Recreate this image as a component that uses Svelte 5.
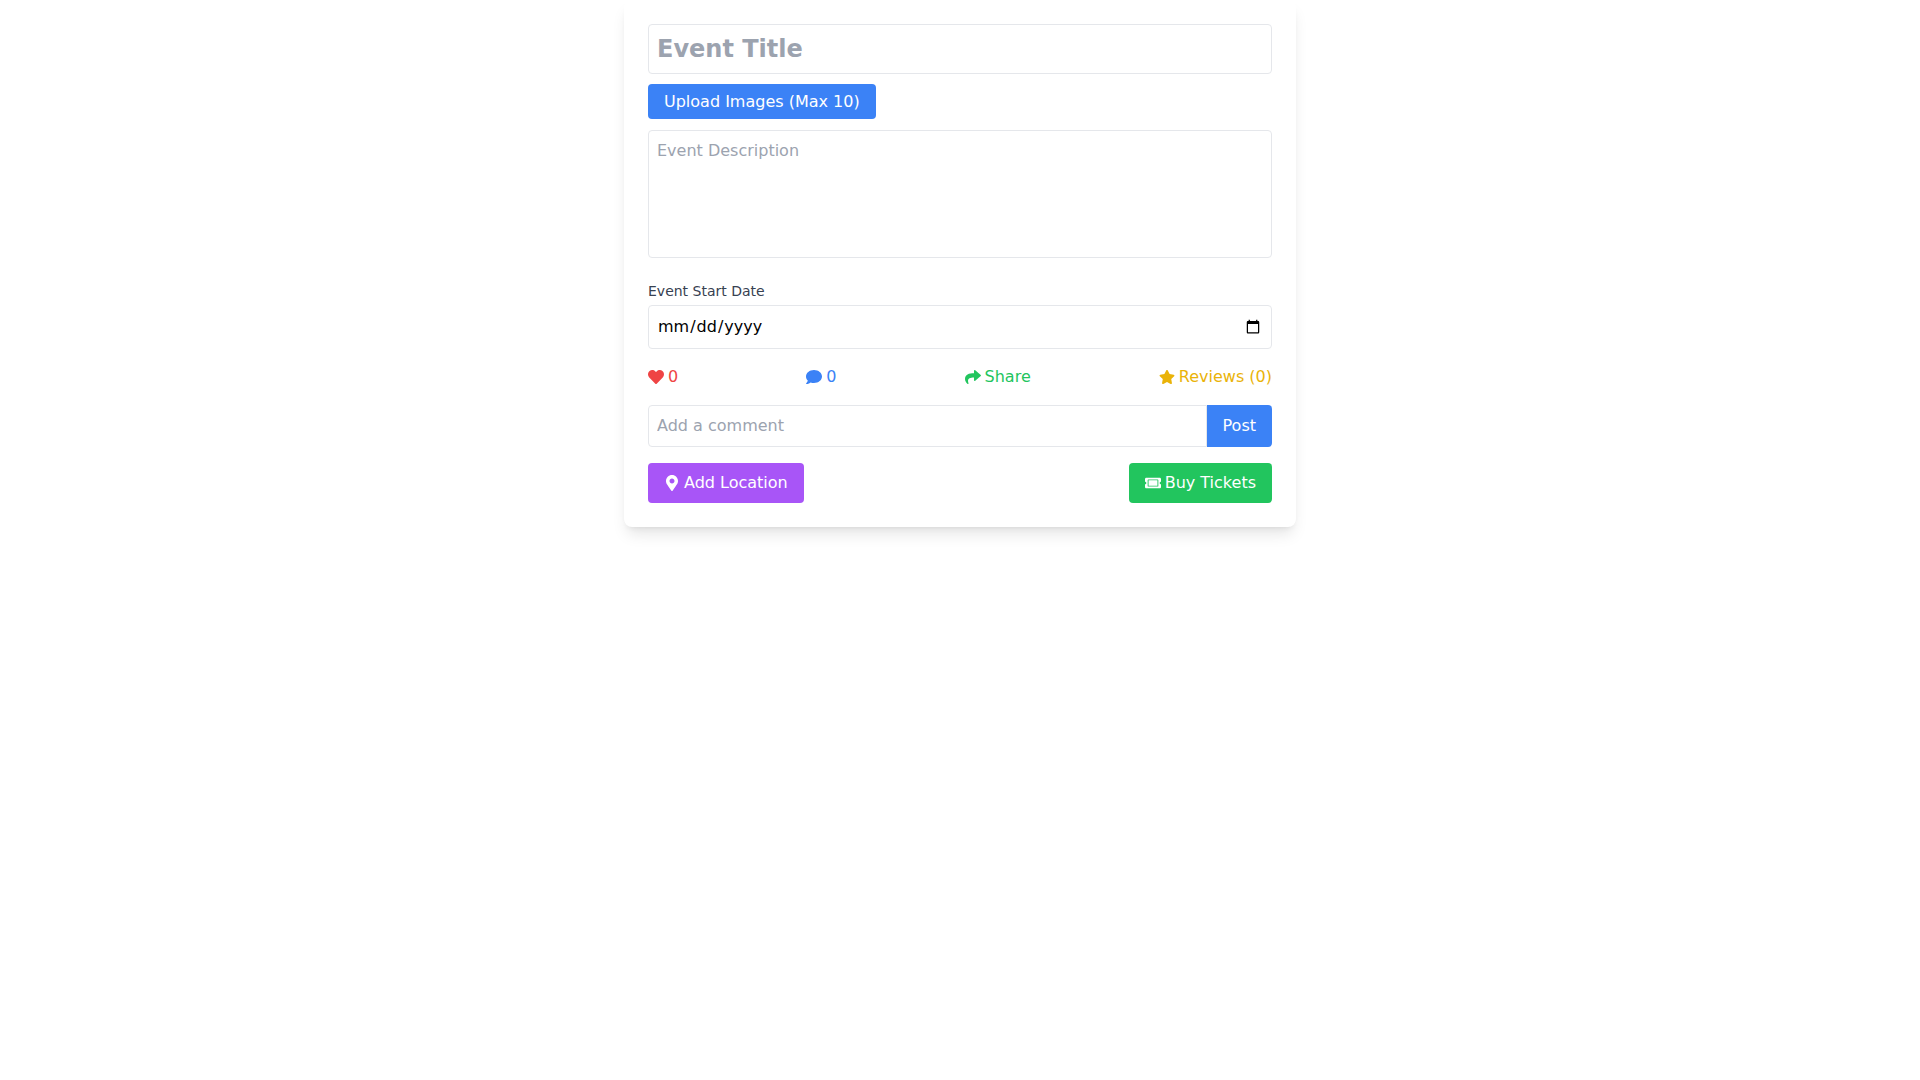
<script lang="ts">
	type Icon = { viewBox: string; path: string };

	const icons: Record<string, Icon> = {
		heart: {
			viewBox: '0 0 512 512',
			path: 'M462.3 62.6C407.5 15.9 326 24.3 275.7 76.2L256 96.5l-19.7-20.3C186.1 24.3 104.5 15.9 49.7 62.6c-62.8 53.6-66.1 149.8-9.9 207.9l193.5 199.8c12.5 12.9 32.8 12.9 45.3 0l193.5-199.8c56.3-58.1 53-154.3-9.8-207.9z'
		},
		comment: {
			viewBox: '0 0 512 512',
			path: 'M256 32C114.6 32 0 125.1 0 240c0 49.6 21.4 95 57 130.7C44.5 421.1 2.7 466 2.2 466.5c-2.2 2.3-2.8 5.7-1.5 8.7S4.8 480 8 480c66.3 0 116-31.8 140.6-51.4 32.7 12.3 69 19.4 107.4 19.4 141.4 0 256-93.1 256-208S397.4 32 256 32z'
		},
		share: {
			viewBox: '0 0 512 512',
			path: 'M503.691 189.836L327.687 37.851C312.281 24.546 288 35.347 288 56.015v80.053C127.371 137.907 0 170.1 0 322.326c0 61.441 39.581 122.309 83.333 154.132 13.653 9.931 33.111-2.533 28.077-18.631C66.066 312.814 132.917 274.316 288 272.085V360c0 20.7 24.3 31.453 39.687 18.164l176.004-152c11.071-9.562 11.086-26.753 0-36.328z'
		},
		star: {
			viewBox: '0 0 576 512',
			path: 'M259.3 17.8L194 150.2 47.9 171.5c-26.2 3.8-36.7 36.1-17.7 54.6l105.7 103-25 145.5c-4.5 26.3 23.2 46 46.4 33.7L288 439.6l130.7 68.7c23.2 12.2 50.9-7.4 46.4-33.7l-25-145.5 105.7-103c19-18.5 8.5-50.8-17.7-54.6L382 150.2 316.7 17.8c-11.7-23.6-45.6-23.9-57.4 0z'
		},
		marker: {
			viewBox: '0 0 384 512',
			path: 'M172.268 501.67C26.97 291.031 0 269.413 0 192 0 85.961 85.961 0 192 0s192 85.961 192 192c0 77.413-26.97 99.031-172.268 309.67-9.535 13.774-29.93 13.773-39.464 0zM192 272c44.183 0 80-35.817 80-80s-35.817-80-80-80-80 35.817-80 80 35.817 80 80 80z'
		},
		ticket: {
			viewBox: '0 0 576 512',
			path: 'M128 160h320v192H128V160zm400 96c0 26.51 21.49 48 48 48v96c0 26.51-21.49 48-48 48H48c-26.51 0-48-21.49-48-48v-96c26.51 0 48-21.49 48-48s-21.49-48-48-48v-96c0-26.51 21.49-48 48-48h480c26.51 0 48 21.49 48 48v96c-26.51 0-48 21.49-48 48zm-48-104c0-13.255-10.745-24-24-24H120c-13.255 0-24 10.745-24 24v208c0 13.255 10.745 24 24 24h336c13.255 0 24-10.745 24-24V152z'
		}
	};

	let title = $state('');
	let description = $state('');
	let startDate = $state('');
	let comment = $state('');
	let likes = $state(0);
	let comments = $state<string[]>([]);
	let reviews = $state<string[]>([]);

	function postComment() {
		if (!comment.trim()) return;
		comments.push(comment);
		comment = '';
	}
</script>

{#snippet icon(name: string)}
	<svg class="icon" viewBox={icons[name].viewBox} aria-hidden="true">
		<path d={icons[name].path} />
	</svg>
{/snippet}

<main class="page">
	<div class="card">
		<input class="field title" type="text" placeholder="Event Title" aria-label="Event Title" bind:value={title} />

		<div class="upload-row">
			<label class="upload">
				Upload Images (Max 10)
				<input class="file" type="file" accept="image/*" multiple />
			</label>
		</div>

		<div class="description-row">
			<textarea
				class="field description"
				placeholder="Event Description"
				aria-label="Event Description"
				bind:value={description}
			></textarea>
		</div>

		<div class="date-row">
			<label class="date-label" for="start-date">Event Start Date</label>
			<input class="field date" id="start-date" type="date" bind:value={startDate} />
		</div>

		<div class="actions">
			<button class="action like" aria-label="Like" onclick={() => likes++}>{@render icon('heart')}{likes}</button>
			<button class="action comments" aria-label="Comments">{@render icon('comment')}{comments.length}</button>
			<button class="action share">{@render icon('share')}Share</button>
			<button class="action reviews">{@render icon('star')}Reviews ({reviews.length})</button>
		</div>

		<div class="comment-row">
			<input
				class="field comment"
				type="text"
				placeholder="Add a comment"
				aria-label="Add a comment"
				bind:value={comment}
			/>
			<button class="btn post" onclick={postComment}>Post</button>
		</div>

		<div class="footer">
			<button class="btn location">{@render icon('marker')}Add Location</button>
			<button class="btn tickets">{@render icon('ticket')}Buy Tickets</button>
		</div>
	</div>
</main>

<style>
	:global(body) {
		margin: 0;
		background: #fff;
	}

	.page {
		min-height: 100vh;
	}

	.card,
	.card * {
		box-sizing: border-box;
	}

	.card {
		max-width: 672px;
		margin: 0 auto;
		padding: 24px;
		background: #fff;
		border-radius: 8px;
		box-shadow:
			0 10px 15px -3px rgba(0, 0, 0, 0.1),
			0 4px 6px -4px rgba(0, 0, 0, 0.1);
		font-family: 'DejaVu Sans', sans-serif;
		font-size: 16px;
		line-height: 24px;
	}

	input,
	textarea,
	button {
		margin: 0;
		font: inherit;
		color: inherit;
	}

	button {
		padding: 0;
		border: none;
		background: transparent;
		cursor: pointer;
	}

	.field {
		width: 100%;
		padding: 8px;
		border: 1px solid #e5e7eb;
		border-radius: 4px;
		background: #fff;
		color: #000;
	}

	.field::placeholder {
		color: #9ca3af;
		opacity: 1;
	}

	.title {
		display: block;
		margin-bottom: 16px;
		font-size: 24px;
		font-weight: bold;
		line-height: 32px;
	}

	.upload-row,
	.description-row,
	.date-row,
	.actions,
	.comment-row {
		margin-bottom: 16px;
	}

	.upload {
		padding: 8px 16px;
		border-radius: 4px;
		background: #3b82f6;
		color: #fff;
		cursor: pointer;
	}

	.file {
		position: absolute;
		width: 1px;
		height: 1px;
		overflow: hidden;
		clip-path: inset(50%);
	}

	.description {
		height: 128px;
		resize: none;
	}

	.date-label {
		display: block;
		margin-bottom: 4px;
		color: #374151;
		font-size: 14px;
		line-height: 20px;
	}

	.date {
		display: block;
	}

	.actions,
	.footer {
		display: flex;
		align-items: center;
		justify-content: space-between;
	}

	.action,
	.btn {
		display: flex;
		align-items: center;
		gap: 4px;
	}

	.icon {
		width: 16px;
		height: 16px;
		fill: currentColor;
	}

	.like {
		color: #ef4444;
	}

	.comments {
		color: #3b82f6;
	}

	.share {
		color: #22c55e;
	}

	.reviews {
		color: #eab308;
	}

	.btn {
		padding: 8px 16px;
		border-radius: 4px;
		color: #fff;
	}

	.comment-row {
		display: flex;
	}

	.comment {
		flex: 1;
		min-width: 0;
		border-radius: 4px 0 0 4px;
	}

	.post {
		border-radius: 0 4px 4px 0;
		background: #3b82f6;
	}

	.location {
		background: #a855f7;
	}

	.tickets {
		background: #22c55e;
	}
</style>
